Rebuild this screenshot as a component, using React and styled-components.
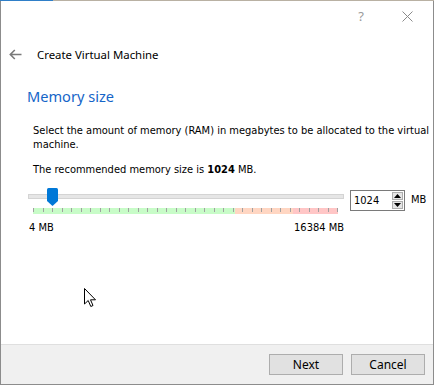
import React from "react";
import styled, { createGlobalStyle } from "styled-components";

const MAX_MB = 16384;
const VALUE_MB = 1024;
const TICK_COUNT = 33;
const BAR_WIDTH = 305;

const App = () => {
  const thumbLeft = 5 + (VALUE_MB / MAX_MB) * BAR_WIDTH - 5.5;

  return (
    <>
      <GlobalStyle />
      <Backdrop />
      <Window>
        <TitleBar>
          <TitleGlyph>?</TitleGlyph>
          <CloseGlyph>
            <svg width="11" height="11" viewBox="0 0 11 11">
              <path d="M0.5 0.5 L10.5 10.5 M10.5 0.5 L0.5 10.5" stroke="#8a8a8a" strokeWidth="1" fill="none" />
            </svg>
          </CloseGlyph>
        </TitleBar>
        <Header>
          <BackArrow>
            <svg width="13" height="11" viewBox="0 0 13 11">
              <path d="M12.5 5.5 H1.5 M5.8 1 L1.3 5.5 L5.8 10" stroke="#7a7a7a" strokeWidth="1.6" fill="none" />
            </svg>
          </BackArrow>
          <HeaderTitle>Create Virtual Machine</HeaderTitle>
        </Header>
        <Content>
          <Heading>Memory size</Heading>
          <Body>
            <Paragraph>
              Select the amount of memory (RAM) in megabytes to be allocated to the virtual machine.
            </Paragraph>
            <Paragraph>
              The recommended memory size is <b>1024</b> MB.
            </Paragraph>
            <SliderRow>
              <Slider>
                <Track />
                <Thumb style={{ left: thumbLeft }}>
                  <svg width="11" height="18" viewBox="0 0 11 18">
                    <path d="M1.5 0 H9.5 Q11 0 11 1.5 V13 L5.5 18 L0 13 V1.5 Q0 0 1.5 0 Z" fill="#0078d7" />
                  </svg>
                </Thumb>
                <TickBar>
                  {Array.from({ length: TICK_COUNT }).map((_, i) => (
                    <Tick key={i} />
                  ))}
                </TickBar>
              </Slider>
              <SpinBox>
                <SpinValue>1024</SpinValue>
                <SpinButtons>
                  <SpinButton>
                    <svg width="7" height="4" viewBox="0 0 7 4">
                      <path d="M3.5 0 L7 4 H0 Z" fill="#000" />
                    </svg>
                  </SpinButton>
                  <SpinButton>
                    <svg width="7" height="4" viewBox="0 0 7 4">
                      <path d="M0 0 H7 L3.5 4 Z" fill="#000" />
                    </svg>
                  </SpinButton>
                </SpinButtons>
              </SpinBox>
              <Unit>MB</Unit>
            </SliderRow>
            <RangeLabels>
              <span>4 MB</span>
              <span>16384 MB</span>
            </RangeLabels>
          </Body>
        </Content>
        <Cursor>
          <svg width="13" height="20" viewBox="0 0 13 20">
            <path d="M0.5 0.5 V16 L4.2 12.5 L6.8 18.5 L9 17.5 L6.5 11.8 H11.5 Z" fill="#fff" stroke="#000" strokeWidth="1" strokeLinejoin="miter" />
          </svg>
        </Cursor>
        <Footer>
          <Button>Next</Button>
          <Button>Cancel</Button>
        </Footer>
      </Window>
    </>
  );
};

export default App;

// Styled Components
const GlobalStyle = createGlobalStyle`
  html, body {
    margin: 0;
    padding: 0;
    background: #ffffff;
  }
  body {
    font-family: "DejaVu Sans Condensed", "Liberation Sans", sans-serif;
  }
`;

const Backdrop = styled.div`
  height: 1px;
  width: 434px;
  background: linear-gradient(to right, #2f7fc8 0 53px, #b9b1a3 53px);
`;

const Window = styled.div`
  position: relative;
  box-sizing: border-box;
  width: 434px;
  height: 384px;
  border-left: 1px solid #8c8c8c;
  border-right: 1px solid #8c8c8c;
  border-bottom: 1px solid #8c8c8c;
  background: #ffffff;
  display: flex;
  flex-direction: column;
`;

const TitleBar = styled.div`
  height: 30px;
  display: flex;
  align-items: center;
  justify-content: flex-end;
`;

const TitleGlyph = styled.span`
  width: 46px;
  text-align: center;
  font-family: "Noto Sans", sans-serif;
  font-size: 13px;
  color: #9a9a9a;
`;

const CloseGlyph = styled.span`
  width: 46px;
  display: flex;
  justify-content: center;
  margin-right: 3px;
`;

const Header = styled.div`
  margin-top: 13px;
  height: 20px;
  display: flex;
  align-items: center;
  padding-left: 8px;
`;

const BackArrow = styled.span`
  display: flex;
  width: 13px;
`;

const HeaderTitle = styled.span`
  margin-left: 15px;
  font-family: "Noto Sans", sans-serif;
  font-size: 11.4px;
  color: #000;
`;

const Content = styled.div`
  padding-left: 26px;
`;

const Heading = styled.div`
  margin-top: 22px;
  font-family: "Noto Sans", sans-serif;
  font-size: 14.6px;
  line-height: 20px;
  color: #1565c8;
`;

const Body = styled.div`
  margin-top: 18px;
  padding-left: 6px;
  font-size: 11px;
  line-height: 14px;
  color: #000;
`;

const Paragraph = styled.p`
  margin: 0 0 11px 0;
  width: 400px;
`;

const SliderRow = styled.div`
  margin-left: -5px;
  margin-top: 8px;
  display: flex;
  align-items: flex-start;
`;

const Slider = styled.div`
  position: relative;
  width: 316px;
  height: 27px;
`;

const Track = styled.div`
  margin-top: 6px;
  box-sizing: border-box;
  height: 5px;
  background: #e6e6e6;
  border: 1px solid #d4d4d4;
`;

const Thumb = styled.div`
  position: absolute;
  top: 0;
  display: flex;
`;

const TickBar = styled.div`
  margin: 9px 0 0 5px;
  width: ${BAR_WIDTH}px;
  height: 6px;
  display: flex;
  justify-content: space-between;
  align-items: flex-start;
  background: linear-gradient(to right, #c8fcc8 0 202px, #ffd6c2 202px 260px, #ffc6c6 260px);
`;

const Tick = styled.span`
  width: 1px;
  height: 4px;
  background: #a0a0a0;
`;

const SpinBox = styled.div`
  margin-top: 2px;
  margin-left: 6px;
  box-sizing: border-box;
  width: 55px;
  height: 21px;
  border: 1px solid #7a7a7a;
  display: flex;
  align-items: center;
  padding-left: 3px;
`;

const SpinValue = styled.span`
  flex: 1;
  font-size: 11px;
`;

const SpinButtons = styled.div`
  display: flex;
  flex-direction: column;
  gap: 1px;
  margin-right: 1px;
`;

const SpinButton = styled.div`
  box-sizing: border-box;
  width: 11px;
  height: 8px;
  border: 1px solid #adadad;
  background: #e5e5e5;
  display: flex;
  align-items: center;
  justify-content: center;
`;

const Unit = styled.span`
  margin-top: 5px;
  margin-left: 6px;
  font-size: 11px;
`;

const RangeLabels = styled.div`
  margin-left: -4px;
  margin-top: 6px;
  width: 315px;
  display: flex;
  justify-content: space-between;
`;

const Cursor = styled.div`
  position: absolute;
  left: 83px;
  top: 287px;
  display: flex;
`;

const Footer = styled.div`
  margin-top: auto;
  height: 39px;
  border-top: 1px solid #dfdfdf;
  background: #f0f0f0;
  display: flex;
  align-items: center;
  justify-content: flex-end;
  gap: 8px;
  padding-right: 8px;
`;

const Button = styled.div`
  box-sizing: border-box;
  width: 74px;
  height: 21px;
  border: 1px solid #adadad;
  background: #e1e1e1;
  display: flex;
  align-items: center;
  justify-content: center;
  font-family: "Noto Sans", sans-serif;
  font-size: 12px;
  color: #000;
`;
